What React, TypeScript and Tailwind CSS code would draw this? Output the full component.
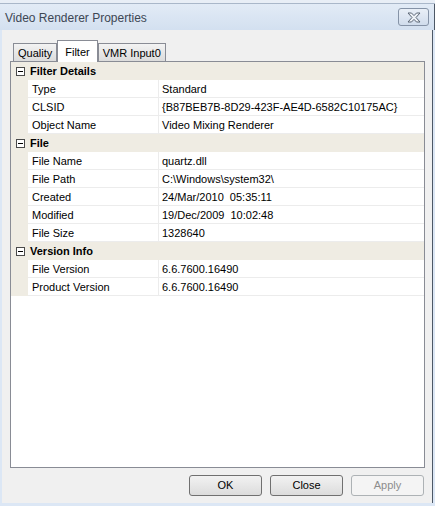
import React from "react";

type Row = { name: string; value: string };
type Section = { title: string; rows: Row[] };

const sections: Section[] = [
  {
    title: "Filter Details",
    rows: [
      { name: "Type", value: "Standard" },
      { name: "CLSID", value: "{B87BEB7B-8D29-423F-AE4D-6582C10175AC}" },
      { name: "Object Name", value: "Video Mixing Renderer" },
    ],
  },
  {
    title: "File",
    rows: [
      { name: "File Name", value: "quartz.dll" },
      { name: "File Path", value: "C:\\Windows\\system32\\" },
      { name: "Created", value: "24/Mar/2010  05:35:11" },
      { name: "Modified", value: "19/Dec/2009  10:02:48" },
      { name: "File Size", value: "1328640" },
    ],
  },
  {
    title: "Version Info",
    rows: [
      { name: "File Version", value: "6.6.7600.16490" },
      { name: "Product Version", value: "6.6.7600.16490" },
    ],
  },
];

function MinusBox() {
  return (
    <svg width="9" height="9" viewBox="0 0 9 9" className="block">
      <rect x="0.5" y="0.5" width="8" height="8" fill="#fff" stroke="#4a4a4a" />
      <path d="M2 4.5h5" stroke="#000" />
    </svg>
  );
}

function CloseGlyph() {
  return (
    <svg width="14" height="11" viewBox="0 0 14 11">
      <path
        d="M1 1h3.5L7 3.6 9.5 1H13L9 5.5 13 10H9.5L7 7.4 4.5 10H1L5 5.5z"
        fill="#eef2f7"
        stroke="#5b6675"
        strokeWidth="1"
        strokeLinejoin="round"
      />
    </svg>
  );
}

function Tab({ label, active }: { label: string; active?: boolean }) {
  if (active) {
    return (
      <div className="relative z-10 -mb-px flex h-[22px] items-start border border-b-0 border-[#898c95] bg-white px-[7px] pt-[3px]">
        {label}
      </div>
    );
  }
  return (
    <div className="flex h-[18px] items-center border border-b-0 border-[#898c95] bg-gradient-to-b from-[#f3f3f3] to-[#dcdcdc] px-[4px] pt-px">
      {label}
    </div>
  );
}

function Button({ label, disabled }: { label: string; disabled?: boolean }) {
  return (
    <div
      className={
        disabled
          ? "flex h-[21px] w-[73px] items-center justify-center rounded-[3px] border border-[#adb2b5] bg-[#f4f4f4] text-[#8d8d8d]"
          : "flex h-[21px] w-[73px] items-center justify-center rounded-[3px] border border-[#707070] bg-gradient-to-b from-[#f2f2f2] to-[#dcdcdc] text-black"
      }
    >
      {label}
    </div>
  );
}

export default function App() {
  return (
    <div
      className="flex h-[506px] w-[435px] flex-col bg-[#dce7f5] text-[11px] text-black"
      style={{ fontFamily: '"Liberation Sans", Arial, sans-serif' }}
    >
      <div className="h-[4px] border-b border-[#a9b7c9] bg-[#e8eef6]" />
      <div className="flex h-[26px] items-center justify-between border-r border-[#4d5866] bg-gradient-to-b from-[#e2ebf6] to-[#d3e0f0] pl-[5px] pr-[5px]">
        <span className="pt-[2px] text-[12px] text-[#3d4754]">Video Renderer Properties</span>
        <div className="flex h-[18px] w-[31px] items-center justify-center rounded-[3px] border border-[#8593a7] bg-gradient-to-b from-[#e9eff7] to-[#d0dcec]">
          <CloseGlyph />
        </div>
      </div>
      <div className="mx-[2px] flex flex-1 flex-col border-r border-[#4d5866] bg-[#f0f0f0]">
        <div className="ml-[11px] mt-[10px] flex items-end">
          <Tab label="Quality" />
          <Tab label="Filter" active />
          <Tab label="VMR Input0" />
        </div>
        <div className="ml-[8px] flex h-[407px] w-[415px] flex-col border border-[#898c95] bg-white">
          {sections.map((s) => (
            <div key={s.title}>
              <div className="flex h-[18px] items-center bg-[#efece3] pt-px">
                <div className="flex w-[17px] justify-end pr-[3px]">
                  <MinusBox />
                </div>
                <span className="pl-[2px] font-bold">{s.title}</span>
              </div>
              {s.rows.map((r) => (
                <div key={r.name} className="flex h-[18px]">
                  <div className="w-[17px] bg-[#efece3]" />
                  <div className="flex w-[131px] items-center border-b border-r border-[#ececec] pl-[4px] pt-px">
                    {r.name}
                  </div>
                  <div className="flex flex-1 items-center whitespace-pre border-b border-[#ececec] pl-[3px] pt-px">
                    {r.value}
                  </div>
                </div>
              ))}
            </div>
          ))}
        </div>
        <div className="mr-[8px] mt-[7px] flex justify-end gap-[8px]">
          <Button label="OK" />
          <Button label="Close" />
          <Button label="Apply" disabled />
        </div>
      </div>
      <div className="h-[3px]" />
    </div>
  );
}
